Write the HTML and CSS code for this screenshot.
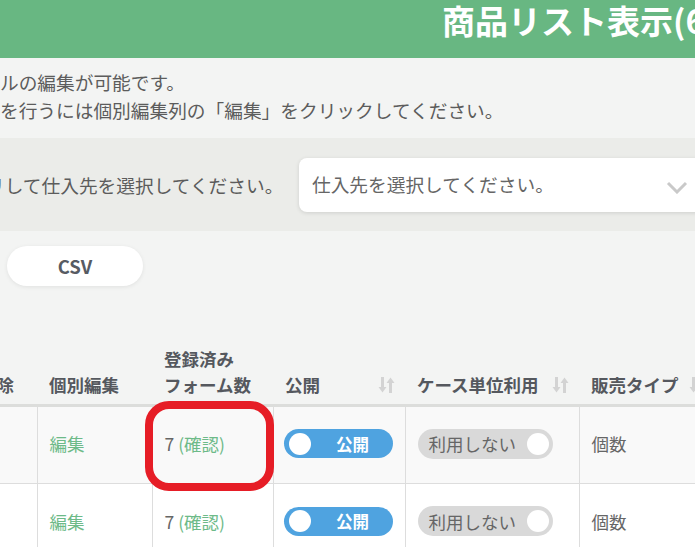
FILE: index.html
```html
<!DOCTYPE html>
<html lang="ja">
<head>
<meta charset="utf-8">
<title>商品リスト表示</title>
<link rel="stylesheet" href="styles.css">
</head>
<body>
<header class="topbar">
  <h1 class="title">商品リスト表示(6件)</h1>
</header>
<div class="notes">
  <p class="note">ルの編集が可能です。</p>
  <p class="note">を行うには個別編集列の「編集」をクリックしてください。</p>
</div>
<section class="panel">
  <span class="panel-label">リして仕入先を選択してください。</span>
  <div class="select">
    <span class="placeholder">仕入先を選択してください。</span>
    <svg class="chevron" width="22" height="13" viewBox="0 0 22 13"><polyline points="2,2 11,11 20,2" fill="none" stroke="#c9c9c9" stroke-width="3"/></svg>
  </div>
</section>
<div class="actions">
  <button class="csv">CSV</button>
</div>
<div class="table-wrap">
<table class="list">
  <colgroup>
    <col class="c0"><col class="c1"><col class="c2"><col class="c3"><col class="c4"><col class="c5"><col class="c6">
  </colgroup>
  <thead>
    <tr>
      <th><div class="th">削除</div></th>
      <th><div class="th">個別編集</div></th>
      <th><div class="th">登録済み<br>フォーム数</div></th>
      <th><div class="th sortable">公開<svg class="sort" width="17" height="18" viewBox="0 0 17 18"><path d="M4.5 1v13" stroke="#d3d3d3" stroke-width="3"/><path d="M0.5 11h8l-4 5.5z" fill="#d3d3d3"/><path d="M12.5 17V4" stroke="#d3d3d3" stroke-width="3"/><path d="M8.5 7h8l-4-5.5z" fill="#d3d3d3"/></svg></div></th>
      <th><div class="th sortable">ケース単位利用<svg class="sort" width="17" height="18" viewBox="0 0 17 18"><path d="M4.5 1v13" stroke="#d3d3d3" stroke-width="3"/><path d="M0.5 11h8l-4 5.5z" fill="#d3d3d3"/><path d="M12.5 17V4" stroke="#d3d3d3" stroke-width="3"/><path d="M8.5 7h8l-4-5.5z" fill="#d3d3d3"/></svg></div></th>
      <th><div class="th sortable">販売タイプ<svg class="sort" width="17" height="18" viewBox="0 0 17 18"><path d="M4.5 1v13" stroke="#d3d3d3" stroke-width="3"/><path d="M0.5 11h8l-4 5.5z" fill="#d3d3d3"/><path d="M12.5 17V4" stroke="#d3d3d3" stroke-width="3"/><path d="M8.5 7h8l-4-5.5z" fill="#d3d3d3"/></svg></div></th>
      <th><div class="th">価格</div></th>
    </tr>
  </thead>
  <tbody>
    <tr class="odd">
      <td></td>
      <td><a class="link">編集</a></td>
      <td class="count-cell"><span class="num">7</span> <a class="link">(確認)</a><span class="highlight"></span></td>
      <td><span class="toggle on"><span class="knob"></span><span class="tlabel">公開</span></span></td>
      <td><span class="toggle off"><span class="tlabel">利用しない</span><span class="knob"></span></span></td>
      <td>個数</td>
      <td></td>
    </tr>
    <tr>
      <td></td>
      <td><a class="link">編集</a></td>
      <td><span class="num">7</span> <a class="link">(確認)</a></td>
      <td><span class="toggle on"><span class="knob"></span><span class="tlabel">公開</span></span></td>
      <td><span class="toggle off"><span class="tlabel">利用しない</span><span class="knob"></span></span></td>
      <td>個数</td>
      <td></td>
    </tr>
  </tbody>
</table>
</div>
</body>
</html>
```
FILE: styles.css
```css
html, body {
  margin: 0;
  padding: 0;
}
body {
  width: 695px;
  height: 547px;
  overflow: hidden;
  background: #f3f4f3;
  color: #5c5c5c;
  font-family: "Noto Sans CJK JP", "Noto Sans", sans-serif;
}
.topbar {
  height: 58px;
  background: #68b782;
  overflow: hidden;
  white-space: nowrap;
}
.title {
  margin: 0;
  padding: 0 0 0 442px;
  font-size: 33px;
  line-height: 40px;
  font-weight: 700;
  color: #ffffff;
}
.notes {
  padding-top: 10px;
}
.note {
  margin: 0;
  font-size: 18.7px;
  line-height: 28px;
  white-space: nowrap;
}
.panel {
  margin-top: 14px;
  height: 93px;
  background: #ebece9;
  display: flex;
  align-items: center;
  white-space: nowrap;
  overflow: hidden;
}
.panel-label {
  font-size: 18.7px;
  margin-left: -14px;
  width: 313px;
  flex: none;
}
.select {
  flex: none;
  width: 420px;
  height: 54px;
  margin-top: 1px;
  background: #ffffff;
  border-radius: 8px;
  box-shadow: 0 1px 4px rgba(0, 0, 0, 0.12);
  display: flex;
  align-items: center;
  box-sizing: border-box;
  padding-left: 13px;
}
.placeholder {
  font-size: 18.7px;
  color: #666;
  width: 354px;
  margin-top: -3px;
}
.chevron {
  margin-top: 4px;
}
.actions {
  padding: 15px 0 0 7px;
}
.csv {
  width: 136px;
  height: 40px;
  border: none;
  border-radius: 20px;
  background: #ffffff;
  box-shadow: 0 1px 4px rgba(0, 0, 0, 0.08);
  font-family: "Noto Sans CJK JP", "Noto Sans", sans-serif;
  font-size: 18.5px;
  font-weight: 700;
  color: #575b63;
  display: block;
}
.table-wrap {
  margin: 60px 0 0 -33px;
}
.list {
  border-collapse: collapse;
  table-layout: fixed;
  width: 900px;
  font-size: 17.5px;
}
.c0 { width: 70px; }
.c1 { width: 115px; }
.c2 { width: 121px; }
.c3 { width: 132px; }
.c4 { width: 174px; }
.c5 { width: 137px; }
.c6 { width: 151px; }
.list th {
  text-align: left;
  vertical-align: bottom;
  padding: 0 10px 6px 12px;
  border-bottom: 3px solid #dcdddb;
  font-weight: 700;
  color: #55585e;
  line-height: 26px;
  white-space: nowrap;
}
.th.sortable {
  display: flex;
  justify-content: space-between;
  align-items: center;
}
.sort {
  flex: none;
}
.list td {
  height: 78px;
  padding: 0 0 3px 12px;
  border-left: 1px solid #dddddd;
  border-bottom: 1px solid #dddddd;
  background: #ffffff;
  vertical-align: middle;
  color: #666;
  white-space: nowrap;
  box-sizing: border-box;
}
.list td:first-child {
  border-left: none;
}
.list tr.odd td {
  background: #f9f9f9;
}
.link {
  color: #6dba88;
}
.num {
  color: #666;
}
.count-cell {
  position: relative;
}
.highlight {
  position: absolute;
  left: -8px;
  top: -6px;
  width: 129px;
  height: 90px;
  border: 8px solid #e61d26;
  border-radius: 24px;
  box-sizing: border-box;
  z-index: 2;
}
.toggle {
  display: inline-flex;
  align-items: center;
  height: 29px;
  border-radius: 15px;
  box-sizing: border-box;
  vertical-align: middle;
}
.toggle .knob {
  width: 22px;
  height: 22px;
  border-radius: 50%;
  background: #ffffff;
  flex: none;
}
.toggle.on {
  width: 109px;
  margin-left: -2px;
  background: #4fa3e0;
  padding-left: 5px;
}
.toggle.on .tlabel {
  flex: 1;
  text-align: center;
  color: #ffffff;
  font-weight: 700;
  font-size: 16.5px;
  padding-left: 2px;
}
.toggle.off {
  width: 135px;
  height: 30px;
  background: #d9d9d9;
  padding: 0 4px 0 11px;
  justify-content: space-between;
}
.toggle.off .tlabel {
  color: #666;
  font-size: 17.5px;
}
```
